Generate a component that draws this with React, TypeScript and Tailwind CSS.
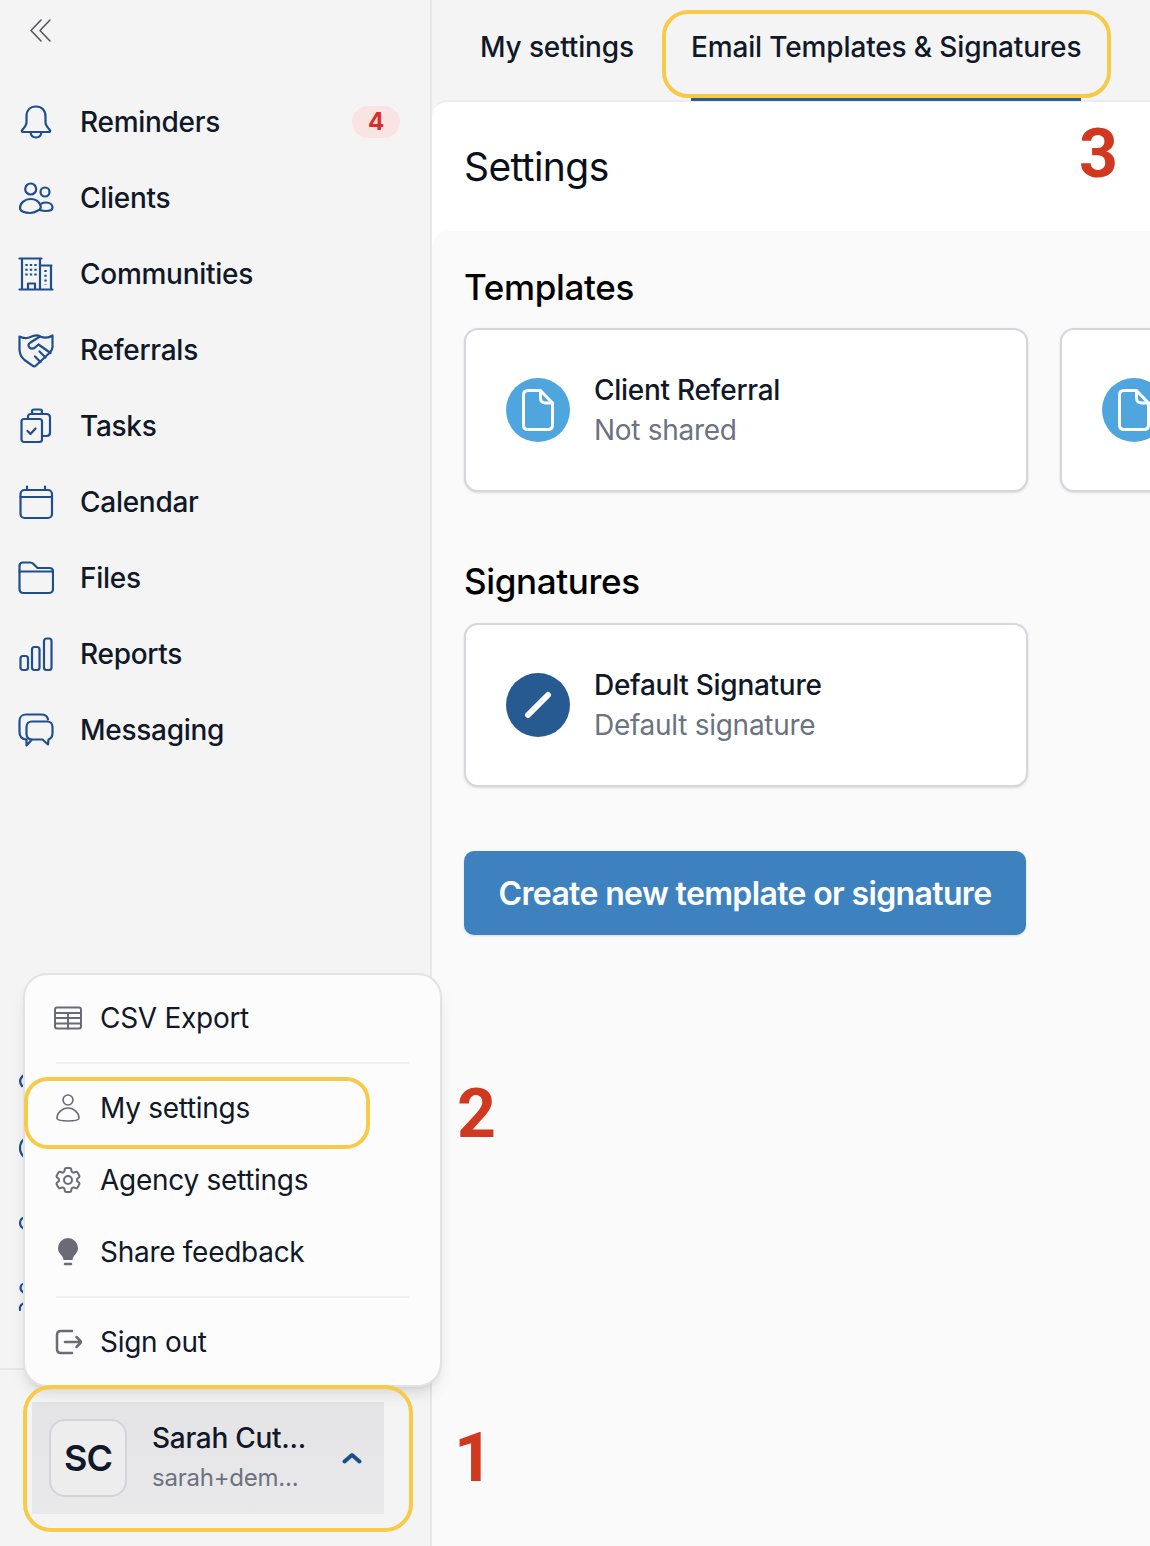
import { HiOutlineCog6Tooth } from "react-icons/hi2";
import type { ReactNode } from "react";

function NavIcon({ children }: { children: ReactNode }) {
  return (
    <svg
      viewBox="0 0 36 36"
      className="h-9 w-9 shrink-0 text-[#1f4e8c]"
      fill="none"
      stroke="currentColor"
      strokeWidth={2.200}
      strokeLinecap="round"
      strokeLinejoin="round"
    >
      {children}
    </svg>
  );
}

const bell = (
  <>
    <path d="M18 2.500c-6 0-9.500 4-9.500 10v6c0 3-2.500 5.500-4.700 8l.4 1.500h27.600l.4-1.500c-2.200-2.500-4.700-5-4.700-8v-6c0-6-3.500-10-9.500-10z" />
    <path d="M12.500 28c.3 3.500 2.500 5.500 5.500 5.500s5.200-2 5.500-5.500" />
  </>
);

const clients = (
  <>
    <circle cx="12.700" cy="9" r="5.500" />
    <circle cx="27" cy="12" r="4.500" />
    <path d="M2 28c0-5 5-9 10.500-9 4.500 0 8.500 2.500 10 6.500.7 2-.5 4-2.500 5-2.500 1.500-5 2.500-8 2.500-5 0-10-1.500-10-5z" />
    <path d="M23.500 23.500c1.500-.7 3-1 4.500-1 3.500 0 6.500 2 6.500 5 0 2.500-3 3.500-6.500 3.500-2 0-4-.3-6-1" />
  </>
);

const building = (
  <>
    <path d="M1.500 33.500h33M4 33.500V3.500M1.500 2.500h22M22 3.500v30M22 9.500h11.500M33 9.500v24M10 33.500v-6h7v6" />
    <path
      strokeWidth={2.400}
      strokeLinecap="butt"
      strokeDasharray="2 2.800"
      d="M8.500 8v14M13 8v14M17.500 8v14M27.500 14v15"
    />
  </>
);

const handshake = (
  <>
    <path d="M1.500 4.500C5 6.500 8 6.500 11 5.500L15 4c3-1 5-1 7 .5 4 1.500 9 1.500 12.500-1V15c0 2-1 4-2.500 5.500L18 33.500c-1 1-2.500 1-3.500.2L6.500 28C3 25 1.500 21 1.500 17z" />
    <path d="M22 4.500L12.500 10.500c-2.500 1.500-2.500 3.500-1 5s3.500 1.500 5.500 0l3.500-3L32.500 21" />
    <path d="M27.500 25.500L21.500 19.500M22.500 30L17 24.500" />
  </>
);

const tasks = (
  <>
    <rect x="3.500" y="11" width="20.500" height="23" rx="2.500" />
    <path d="M10 11V8.500c0-1.500 1-2.500 2.500-2.500h16c2 0 3.500 1.500 3.500 3.500v15c0 2-1.500 3.500-3.500 3.500H24" />
    <rect x="14" y="1.500" width="10" height="4.500" rx="2" />
    <path d="M9.500 23l3 3 5-5.500" />
  </>
);

const calendar = (
  <>
    <rect x="2.500" y="6" width="31.500" height="28" rx="4" />
    <path d="M2.500 13h31.500M9 2.500V6M27 2.500V6" />
  </>
);

const files = (
  <>
    <path d="M1.500 10V6c0-2 1.500-3.500 3.500-3.500h7c1.500 0 2.500.5 3.500 1.500l4 4h12c2 0 3.500 1.500 3.500 3.500V29c0 2.500-2 4-4 4H5.500c-2.500 0-4-1.500-4-4z" />
    <path d="M1.500 11.500h33" />
  </>
);

const reports = (
  <>
    <rect x="2.500" y="20" width="7.500" height="14" rx="2.500" />
    <rect x="14" y="11" width="7.500" height="23" rx="2.500" />
    <rect x="26" y="2.500" width="7.500" height="31.500" rx="2.500" />
  </>
);

const messaging = (
  <>
    <path d="M8 27.500C4 27 1.500 24 1.500 20V9c0-4 3-6.500 6.500-6.500h15c4 0 6.500 2 7 5" />
    <path d="M14 9.500h15c3.500 0 5.500 2.500 5.500 5.500v6c0 3-1.500 5.500-4 6.500l-.5 5-5.500-5H14c-3.500 0-5.500-2.500-5.500-5.500v-7c0-3 2-5.500 5.500-5.500zM8.500 27.500L8.500 33.500l5.500-6" />
  </>
);

const navItems: { label: string; icon: ReactNode; badge?: string }[] = [
  { label: "Reminders", icon: bell, badge: "4" },
  { label: "Clients", icon: clients },
  { label: "Communities", icon: building },
  { label: "Referrals", icon: handshake },
  { label: "Tasks", icon: tasks },
  { label: "Calendar", icon: calendar },
  { label: "Files", icon: files },
  { label: "Reports", icon: reports },
  { label: "Messaging", icon: messaging },
];

// lower nav, only a sliver of each shows left of the user menu
const lowerIcons: ReactNode[] = [
  <path key="a" d="M6 21c-4 3-5 7-2 11" />,
  <circle key="b" cx="14" cy="18" r="12" />,
  <circle key="c" cx="8" cy="17" r="6" />,
  <>
    <circle cx="7" cy="6" r="4.500" />
    <path d="M2 28c-1-4 2-7 6-7" />
  </>,
];

function MenuIcon({ children }: { children: ReactNode }) {
  return (
    <svg
      viewBox="0 0 28 28"
      className="h-7 w-7 shrink-0 text-[#6b6b78]"
      fill="none"
      stroke="currentColor"
      strokeWidth={1.600}
      strokeLinecap="round"
      strokeLinejoin="round"
    >
      {children}
    </svg>
  );
}

function MenuItem({ icon, label }: { icon: ReactNode; label: string }) {
  return (
    <div className="flex h-[72px] items-center gap-[18px] pl-[29px] text-[28px] tracking-[-0.01em] text-[#111827]">
      {icon}
      <span>{label}</span>
    </div>
  );
}

function UserMenu() {
  return (
    <div className="absolute left-[23px] top-[973px] h-[414px] w-[419px] rounded-[24px] border-2 border-[#e2e2e4] bg-[#fcfcfd] pt-[7px] shadow-lg">
      <MenuItem
        label="CSV Export"
        icon={
          <MenuIcon>
            <rect x="1" y="3.500" width="26" height="21" rx="2" strokeWidth={2} />
            <path strokeWidth={2} d="M1 9h26M1 14h26M1 19.500h26M14 9v15.500" />
          </MenuIcon>
        }
      />
      <div className="mx-[31px] my-[8px] h-0.5 bg-[#f0f0f1]" />
      <MenuItem
        label="My settings"
        icon={
          <MenuIcon>
            <circle cx="14" cy="6" r="5" />
            <path d="M3 24c0-5 5-10 11-10s11 5 11 10c0 2-5 3-11 3s-11-1-11-3z" />
          </MenuIcon>
        }
      />
      <MenuItem
        label="Agency settings"
        icon={<HiOutlineCog6Tooth className="-mx-[2px] h-8 w-8 shrink-0 text-[#6b6b78]" />}
      />
      <MenuItem
        label="Share feedback"
        icon={
          <MenuIcon>
            <path
              fill="currentColor"
              stroke="none"
              d="M14 0a10 10 0 0 0-10 10c0 4 2.500 6 4 8 .7 1 1.500 2.500 1.500 4h9c0-1.500.8-3 1.500-4 1.500-2 4-4 4-8a10 10 0 0 0-10-10z"
            />
            <path strokeWidth={2.500} d="M11 26h6" />
          </MenuIcon>
        }
      />
      <div className="mx-[31px] my-[8px] h-0.5 bg-[#f0f0f1]" />
      <MenuItem
        label="Sign out"
        icon={
          <MenuIcon>
            <path
              strokeWidth={2.500}
              d="M18 3H7C4 3 3 5 3 7v14c0 2 1 4 4 4h11M22.500 9l5 5-5 5M11 14h16"
            />
          </MenuIcon>
        }
      />
    </div>
  );
}

function Sidebar() {
  return (
    <aside className="flex h-full w-[432px] shrink-0 flex-col border-r-2 border-[#e7e7e8]">
      <div className="flex h-[84px] items-start pl-[30px] pt-[19px]">
        <svg viewBox="0 0 21 23" className="h-[23px] w-[21px] text-[#52525b]" fill="none" stroke="currentColor" strokeWidth={1.500} strokeLinecap="round" strokeLinejoin="round">
          <path d="M11 1L1 11.500 11 22M20 1L10 11.500 20 22" />
        </svg>
      </div>
      <nav className="flex flex-col">
        {navItems.map((item) => (
          <div key={item.label} className="flex h-[76px] items-center pl-[18px] pr-[31px]">
            <NavIcon>{item.icon}</NavIcon>
            <span className="ml-[26px] text-[28px] font-medium tracking-[-0.01em] text-[#111827]">{item.label}</span>
            {item.badge && (
              <span className="ml-auto mr-[-1px] flex h-8 w-12 items-center justify-center rounded-full bg-[#fae3e3] text-[24px] font-bold text-[#d92d2d]">
                {item.badge}
              </span>
            )}
          </div>
        ))}
      </nav>
      <div className="mt-auto mb-[30px] flex flex-col pl-[18px]">
        {lowerIcons.map((icon, i) => (
          <div key={i} className="flex h-[76px] items-center">
            <NavIcon>{icon}</NavIcon>
          </div>
        ))}
      </div>
      <div className="h-[178px] border-t-2 border-[#e7e7e8] pl-[32px] pt-[32px]">
        <div className="flex h-[112px] w-[352px] items-center bg-gradient-to-b from-[#e4e4e6] to-[#e9e9eb] pl-[17px]">
          <div className="flex h-[78px] w-[78px] items-center justify-center rounded-2xl border-2 border-[#d4d4d8] bg-[#ededee] text-[36px] font-semibold tracking-[-0.03em] text-[#111827]">
            SC
          </div>
          <div className="ml-[25px] w-[160px]">
            <div className="text-[28px] font-medium leading-[40px] tracking-[-0.01em] text-[#111827]">Sarah Cut...</div>
            <div className="text-[24px] leading-[40px] tracking-[-0.01em] text-[#6b7280]">sarah+dem...</div>
          </div>
          <svg viewBox="0 0 20 12" className="ml-[30px] h-3 w-5 text-[#1f4e8c]" fill="none" stroke="currentColor" strokeWidth={4} strokeLinecap="round" strokeLinejoin="round">
            <path d="M2.500 9.500L10 3l7.500 6.500" />
          </svg>
        </div>
      </div>
    </aside>
  );
}

function CardRow({ icon, title, sub }: { icon: ReactNode; title: string; sub: string }) {
  return (
    <div className="flex h-[164px] w-[564px] shrink-0 items-center rounded-[14px] border-2 border-[#d5d7dd] bg-white pl-[40px] shadow-sm">
      {icon}
      <div className="ml-[24px] whitespace-nowrap">
        <div className="text-[28px] font-medium leading-[40px] tracking-[-0.01em] text-[#111827]">{title}</div>
        <div className="text-[28px] leading-[40px] tracking-[-0.01em] text-[#6b7280]">{sub}</div>
      </div>
    </div>
  );
}

function DocIcon() {
  return (
    <div className="flex h-16 w-16 shrink-0 items-center justify-center rounded-full bg-[#4fa6de]">
      <svg viewBox="0 0 32 42" className="h-[42px] w-8 text-white" fill="none" stroke="currentColor" strokeWidth={3} strokeLinecap="round" strokeLinejoin="round">
        <path d="M6 1.500h12.500L30.500 14v22c0 3-1.500 4.500-4.500 4.500H6c-3 0-4.500-1.500-4.500-4.500V6c0-3 1.500-4.500 4.500-4.500z" />
        <path d="M18.500 1.500V9c0 3 2 5 5 5h7" />
      </svg>
    </div>
  );
}

function PenIcon() {
  return (
    <div className="flex h-16 w-16 shrink-0 items-center justify-center rounded-full bg-[#285a92]">
      <svg viewBox="0 0 28 28" className="h-7 w-7 text-white" fill="none" stroke="currentColor" strokeWidth={6} strokeLinecap="round">
        <path d="M4 24L24 4" />
      </svg>
    </div>
  );
}

function Main() {
  return (
    <main className="flex h-full min-w-0 flex-1 flex-col">
      <div className="flex h-[100px] shrink-0 items-start gap-[57px] pl-[48px]">
        <div className="pt-[27px] text-[28px] font-medium leading-[40px] tracking-[-0.005em] text-[#111827]">My settings</div>
        <div className="relative z-10 h-[101px] border-b-4 border-[#2c5a92] pt-[27px] text-[28px] font-medium leading-[40px] tracking-[-0.005em] text-[#111827]">
          Email Templates &amp; Signatures
        </div>
      </div>
      <div className="flex flex-1 flex-col rounded-tl-[16px] border-t-2 border-[#ececed] bg-white">
        <div className="flex h-[129px] shrink-0 items-center pl-[32px]">
          <h1 className="text-[39px] font-normal leading-[48px] tracking-[-0.015em] text-[#0b0f19]">Settings</h1>
        </div>
        <div className="flex-1 overflow-hidden rounded-tl-[16px] bg-[#fafafa] pl-[32px]">
          <h2 className="mt-[36px] text-[35px] font-medium leading-[40px] tracking-[-0.01em] text-black">Templates</h2>
          <div className="mt-[21px] flex gap-[32px]">
            <CardRow icon={<DocIcon />} title="Client Referral" sub="Not shared" />
            <div className="flex h-[164px] w-[564px] shrink-0 items-center rounded-[14px] border-2 border-[#d5d7dd] bg-white pl-[40px] shadow-sm">
              <DocIcon />
            </div>
          </div>
          <h2 className="mt-[69px] text-[35px] font-medium leading-[40px] tracking-[-0.01em] text-black">Signatures</h2>
          <div className="mt-[22px]">
            <CardRow icon={<PenIcon />} title="Default Signature" sub="Default signature" />
          </div>
          <button className="mt-[64px] flex h-[84px] w-[562px] items-center justify-center rounded-[10px] bg-[#3d82bf] pt-0.5 text-[32px] font-semibold tracking-[-0.02em] text-white shadow-sm">
            Create new template or signature
          </button>
        </div>
      </div>
    </main>
  );
}

function Annotations() {
  const digit = "absolute font-['Roboto',sans-serif] text-[68px] font-bold leading-none text-[#d0391f]";
  const ring = "absolute border-[4px] border-[#f8ca4a]";
  return (
    <>
      <div className={`${ring} left-[23px] top-[1385px] h-[147px] w-[390px] rounded-[28px]`} />
      <div className={`${ring} left-[24px] top-[1077px] h-[72px] w-[346px] rounded-[24px]`} />
      <div className={`${ring} left-[662px] top-[10px] z-20 h-[88px] w-[449px] rounded-[26px]`} />
      <span className={`${digit} left-[454px] top-[1424px]`}>1</span>
      <span className={`${digit} left-[457px] top-[1080px]`}>2</span>
      <span className={`${digit} left-[1079px] top-[120px]`}>3</span>
    </>
  );
}

export default function App() {
  return (
    <div className="relative flex h-[1546px] w-[1150px] overflow-hidden bg-[#f4f4f5] font-['Inter',sans-serif]">
      <Sidebar />
      <Main />
      <UserMenu />
      <Annotations />
    </div>
  );
}
